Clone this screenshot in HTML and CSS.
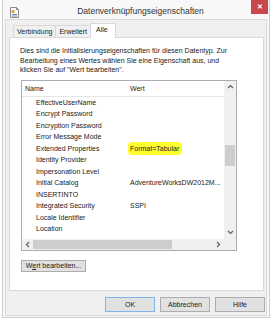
FILE: index.html
```html
<!DOCTYPE html>
<html lang="de">
<head>
  <meta charset="UTF-8" />
  <meta name="viewport" content="width=device-width, initial-scale=1" />
  <title>Datenverknüpfungseigenschaften</title>
  <link rel="stylesheet" href="styles.css">
</head>
<body>

  <div class="window">
    <div class="titlebar">
      <svg class="app-icon" width="11" height="11" viewBox="0 0 11 11">
        <path d="M1.5 0.5 H7.5 L9.5 2.5 V10.5 H1.5 Z" fill="#fbfbfb" stroke="#8a8a8a" />
        <path d="M7.5 0.5 V2.5 H9.5" fill="none" stroke="#8a8a8a" />
        <rect x="2.5" y="3" width="3" height="3" fill="#d8a64a" />
        <path d="M3 7.5 H8 M3 9 H8" stroke="#6f8fb8" />
      </svg>
      <span class="title">Datenverknüpfungseigenschaften</span>
      <div class="close">&#x2715;</div>
    </div>

    <div class="client">
      <div class="tabs">
        <div class="tab">Verbindung</div>
        <div class="tab">Erweitert</div>
        <div class="tab active">Alle</div>
      </div>

      <div class="panel">
        <p class="intro">
          Dies sind die Initialisierungseigenschaften für diesen Datentyp. Zur<br>
          Bearbeitung eines Wertes wählen Sie eine Eigenschaft aus, und<br>
          klicken Sie auf "Wert bearbeiten".
        </p>

        <div class="listbox">
          <div class="list-main">
            <div class="list-view">
              <div class="list-header">
                <span class="col-name">Name</span>
                <span class="col-value">Wert</span>
              </div>
              <div class="row"><span class="col-name">EffectiveUserName</span><span class="col-value"></span></div>
              <div class="row"><span class="col-name">Encrypt Password</span><span class="col-value"></span></div>
              <div class="row"><span class="col-name">Encryption Password</span><span class="col-value"></span></div>
              <div class="row"><span class="col-name">Error Message Mode</span><span class="col-value"></span></div>
              <div class="row"><span class="col-name">Extended Properties</span><span class="col-value"><span class="marker">Format=Tabular</span></span></div>
              <div class="row"><span class="col-name">Identity Provider</span><span class="col-value"></span></div>
              <div class="row"><span class="col-name">Impersonation Level</span><span class="col-value"></span></div>
              <div class="row"><span class="col-name">Initial Catalog</span><span class="col-value">AdventureWorksDW2012M...</span></div>
              <div class="row"><span class="col-name">INSERTINTO</span><span class="col-value"></span></div>
              <div class="row"><span class="col-name">Integrated Security</span><span class="col-value">SSPI</span></div>
              <div class="row"><span class="col-name">Locale Identifier</span><span class="col-value"></span></div>
              <div class="row"><span class="col-name">Location</span><span class="col-value"></span></div>
            </div>

            <div class="vscroll">
              <div class="arrow">
                <svg width="7" height="5" viewBox="0 0 7 5"><path d="M1 4 L3.5 1.5 L6 4" fill="none" stroke="#606060" stroke-width="1.2" /></svg>
              </div>
              <div class="track"><div class="thumb"></div></div>
              <div class="arrow">
                <svg width="7" height="5" viewBox="0 0 7 5"><path d="M1 1 L3.5 3.5 L6 1" fill="none" stroke="#606060" stroke-width="1.2" /></svg>
              </div>
            </div>
          </div>

          <div class="hscroll-row">
            <div class="hscroll">
              <div class="arrow">
                <svg width="5" height="7" viewBox="0 0 5 7"><path d="M4 1 L1.5 3.5 L4 6" fill="none" stroke="#606060" stroke-width="1.2" /></svg>
              </div>
              <div class="track"><div class="thumb"></div></div>
              <div class="arrow">
                <svg width="5" height="7" viewBox="0 0 5 7"><path d="M1 1 L3.5 3.5 L1 6" fill="none" stroke="#606060" stroke-width="1.2" /></svg>
              </div>
            </div>
            <div class="corner"></div>
          </div>
        </div>

        <button type="button" class="btn edit-btn">W<u>e</u>rt bearbeiten...</button>
      </div>

      <div class="dialog-buttons">
        <button type="button" class="btn default">OK</button>
        <button type="button" class="btn">Abbrechen</button>
        <button type="button" class="btn">Hilfe</button>
      </div>
    </div>
  </div>

</body>
</html>
```

FILE: styles.css
```css
* { box-sizing: border-box; }

body {
  margin: 0;
  padding: 0;
  background-color: #ffffff;
  font-family: 'Liberation Sans', Arial, sans-serif;
  font-size: 7px;
  color: #222;
}

.window {
  width: 268px;
  height: 318px;
  margin-left: 2px;
  padding: 0 2px 1px 2px;
  border: 1px solid #cfcfcf;
  border-top: none;
  background-color: #f8f8f8;
  display: flex;
  flex-direction: column;
}

.titlebar {
  height: 19px;
  display: flex;
  align-items: center;
  position: relative;
}

.app-icon {
  margin-left: 4px;
  margin-top: 6px;
}

.title {
  flex: 1;
  text-align: center;
  font-size: 8.5px;
  color: #333;
  padding-right: 6px;
  margin-top: 2px;
}

.close {
  position: absolute;
  top: 0;
  right: -1px;
  width: 17px;
  height: 14px;
  background-color: #c7474a;
  color: #fff;
  font-size: 7px;
  font-weight: bold;
  display: flex;
  align-items: center;
  justify-content: center;
}

.client {
  flex: 1;
  border: 1px solid #dadada;
  background-color: #f0f0f0;
  padding: 3px 2px 2px 3px;
  display: flex;
  flex-direction: column;
}

.tabs {
  display: flex;
  align-items: flex-end;
  margin-left: 4px;
  margin-bottom: -1px;
  position: relative;
  z-index: 1;
}

.tab {
  height: 13px;
  padding: 0 3px;
  border: 1px solid #d9d9d9;
  border-right: none;
  background-color: #f0f0f0;
  line-height: 12px;
}

.tab.active {
  height: 15px;
  padding: 0 7px 0 5px;
  border-right: 1px solid #d9d9d9;
  border-bottom: none;
  background-color: #ffffff;
  line-height: 12px;
}

.panel {
  height: 254px;
  border: 1px solid #d9d9d9;
  background-color: #ffffff;
  padding: 8px 0 0 11px;
}

.intro {
  margin: 0 0 5px -1px;
  line-height: 9.5px;
}

.listbox {
  width: 216px;
  height: 171px;
  border: 1px solid #abadb3;
  display: flex;
  flex-direction: column;
}

.list-main {
  height: 158px;
  display: flex;
}

.list-view {
  flex: 1;
  min-width: 0;
}

.list-header {
  height: 16px;
  display: flex;
  align-items: center;
  border-bottom: 1px solid #e5e5e5;
  padding-left: 3px;
}

.list-header .col-name {
  width: 105px;
}

.row {
  height: 11.5px;
  line-height: 11.5px;
  display: flex;
  white-space: nowrap;
  padding-left: 14px;
}

.row .col-name {
  width: 94px;
  flex-shrink: 0;
}

.row .col-value {
  flex: 1;
}

.marker {
  background-color: #ffff2e;
  padding: 3px 3px 3px 2px;
  margin-left: -2px;
  border-radius: 4px;
}

.vscroll {
  width: 12px;
  background-color: #f0f0f0;
  display: flex;
  flex-direction: column;
}

.vscroll .arrow {
  height: 12px;
  display: flex;
  align-items: center;
  justify-content: center;
}

.vscroll .track {
  flex: 1;
  padding: 52px 1px 0 1px;
}

.vscroll .thumb {
  height: 21px;
  background-color: #cdcdcd;
}

.hscroll-row {
  flex: 1;
  display: flex;
}

.hscroll {
  flex: 1;
  background-color: #f0f0f0;
  display: flex;
}

.hscroll .arrow {
  width: 11px;
  display: flex;
  align-items: center;
  justify-content: center;
}

.hscroll .track {
  flex: 1;
  padding: 1px 0;
}

.hscroll .thumb {
  width: 139px;
  height: 100%;
  background-color: #cdcdcd;
}

.corner {
  width: 12px;
  background-color: #f0f0f0;
}

.btn {
  font-family: 'Liberation Sans', Arial, sans-serif;
  font-size: 7px;
  color: #222;
  background-color: #e1e1e1;
  border: 1px solid #adadad;
  padding: 0;
  margin: 0;
}

.edit-btn {
  margin-top: 9px;
  width: 65px;
  height: 12px;
}

.dialog-buttons {
  display: flex;
  justify-content: flex-end;
  gap: 5px;
  margin-top: 6px;
  margin-right: -1px;
}

.dialog-buttons .btn {
  width: 50px;
  height: 15px;
}

.dialog-buttons .btn.default {
  border-color: #7eb4ea;
}
```
